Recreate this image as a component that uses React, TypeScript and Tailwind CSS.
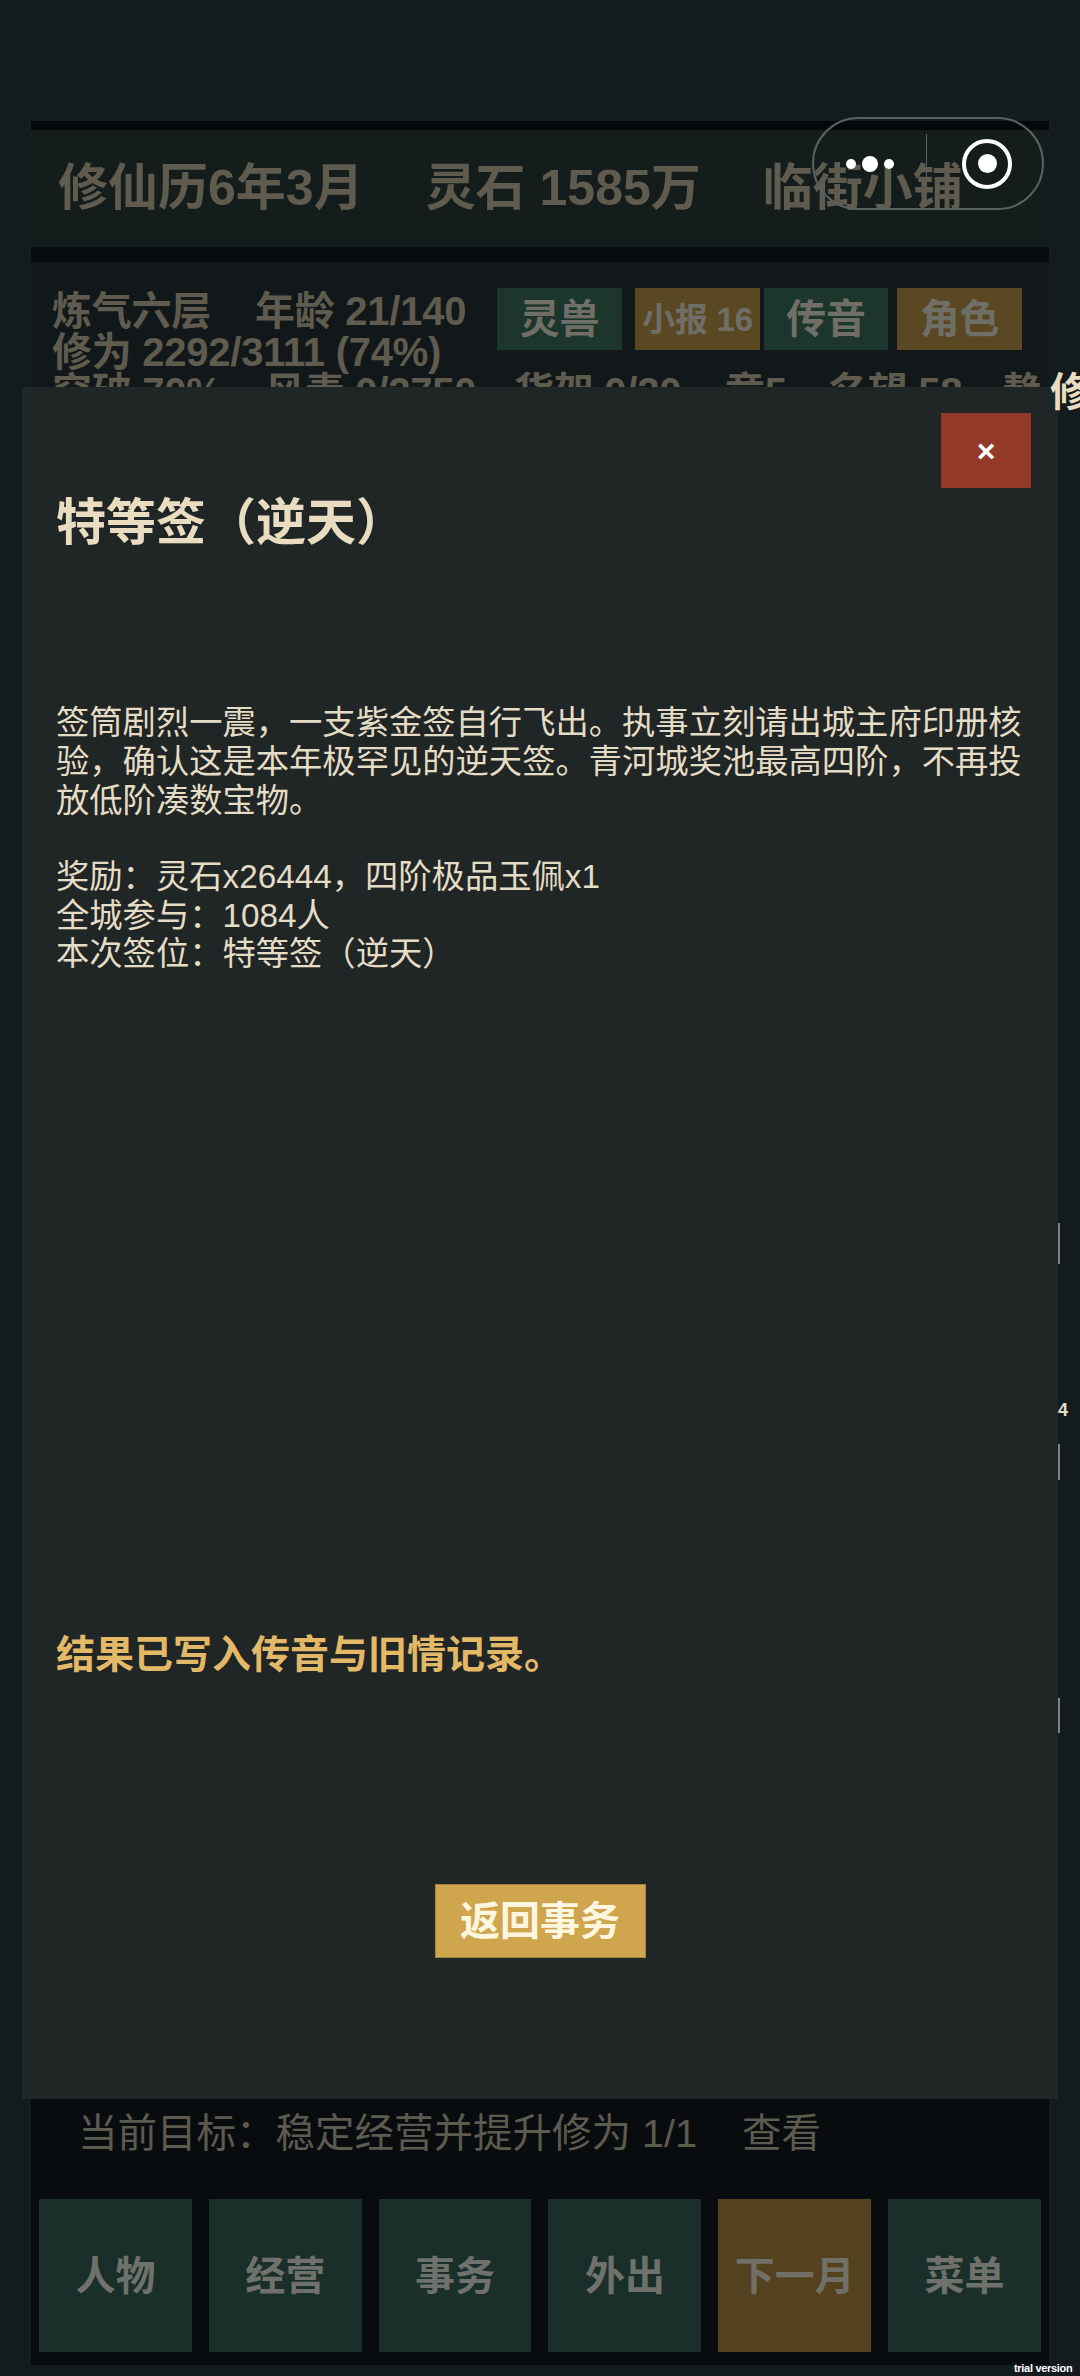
const font = "font-['Liberation_Sans','Noto_Sans_CJK_SC',sans-serif]";

const sideButtons = [
  { label: "灵兽", cls: "w-[125px] bg-[#1c352d] text-[40px]", mr: "mr-[13px]" },
  { label: "小报 16", cls: "w-[125px] bg-[#5a4822] text-[33px]", mr: "mr-[4px]" },
  { label: "传音", cls: "w-[124px] bg-[#1c352d] text-[40px]", mr: "mr-[9px]" },
  { label: "角色", cls: "w-[125px] bg-[#5a4822] text-[40px]", mr: "" },
];

const navItems = [
  { label: "人物", gold: false },
  { label: "经营", gold: false },
  { label: "事务", gold: false },
  { label: "外出", gold: false },
  { label: "下一月", gold: true },
  { label: "菜单", gold: false },
];

function Capsule() {
  return (
    <div className="absolute left-[812px] top-[117px] flex h-[93px] w-[232px] items-center rounded-full border-2 border-[#5a5f5f]">
      <div className="flex w-[112px] items-center justify-center gap-[6px]">
        <span className="h-[10px] w-[10px] rounded-full bg-white" />
        <span className="h-[16px] w-[16px] rounded-full bg-white" />
        <span className="h-[10px] w-[10px] rounded-full bg-white" />
      </div>
      <div className="h-[59px] w-px bg-[#5a5f5f]" />
      <div className="ml-[35px] flex h-[50px] w-[50px] items-center justify-center rounded-full border-[4px] border-white">
        <span className="h-[19px] w-[19px] rounded-full bg-white" />
      </div>
    </div>
  );
}

function Modal() {
  return (
    <div className="absolute left-[22px] top-[387px] flex h-[1712px] w-[1036px] flex-col bg-[#202526] px-[34px]">
      <button className="absolute right-[27px] top-[26px] flex h-[75px] w-[90px] items-center justify-center bg-[#93392a] text-[32px] font-bold leading-none text-white">
        ×
      </button>
      <h2 className="mt-[107px] text-[50px] font-semibold leading-[58px] text-[#e9dcc0]">特等签（逆天）</h2>
      <div className="mt-[151px] text-[33.3px] leading-[39px] text-[#e4dcc4]">
        <p>签筒剧烈一震，一支紫金签自行飞出。执事立刻请出城主府印册核验，确认这是本年极罕见的逆天签。青河城奖池最高四阶，不再投放低阶凑数宝物。</p>
        <div className="mt-[38px] leading-[38.5px]">
          <p>奖励：灵石x26444，四阶极品玉佩x1</p>
          <p>全城参与：1084人</p>
          <p>本次签位：特等签（逆天）</p>
        </div>
      </div>
      <p className="mt-[658px] text-[39px] font-semibold leading-[46px] text-[#e3b866]">结果已写入传音与旧情记录。</p>
      <button className="mx-auto mt-[206px] flex h-[74px] w-[211px] items-center justify-center border border-[#a5843f] bg-[#cfa54d] text-[40px] font-semibold text-[#fff6e0]">
        返回事务
      </button>
    </div>
  );
}

export default function App() {
  return (
    <div className={`relative h-[2376px] w-[1080px] overflow-hidden bg-[#141b1f] ${font}`}>
      <div className="flex h-full flex-col px-[31px] pb-[11px] pt-[121px]">
        <div className="h-[9px] bg-[#050709]" />
        <div className="flex h-[117px] items-center gap-[62px] whitespace-nowrap bg-[#141c1c] pl-[27px] text-[50px] font-semibold text-[#5f5b4f]">
          <span>修仙历6年3月</span>
          <span>灵石 1585万</span>
          <span>临街小铺</span>
        </div>
        <div className="h-[15px] bg-[#090c0e]" />
        <div className="h-[200px] overflow-hidden bg-[#12181a] pl-[21px] pt-[29px] text-[40px] font-semibold leading-[41px] tracking-[-0.25px] text-[#5f5b4f]">
          <div className="flex">
            <div className="w-[445px] shrink-0 whitespace-nowrap">
              <p className="flex gap-[44px]"><span>炼气六层</span><span>年龄 21/140</span></p>
              <p>修为 2292/3111 (74%)</p>
            </div>
            <div className="-mt-[3px] flex h-[62px] shrink-0 text-[#6f6f68]">
              {sideButtons.map((b) => (
                <div key={b.label} className={`flex shrink-0 items-center justify-center ${b.cls} ${b.mr}`}>{b.label}</div>
              ))}
            </div>
          </div>
          <p className="-mt-[1px] flex whitespace-nowrap">
            <span className="w-[213px] shrink-0">穿破 70%</span>
            <span className="w-[249px] shrink-0">风毒 0/2750</span>
            <span className="w-[211px] shrink-0">货架 0/20</span>
            <span className="w-[103px] shrink-0">章5</span>
            <span className="w-[175px] shrink-0">名望 58</span>
            <span>静</span>
          </p>
        </div>
        <div className="flex-1 bg-[#12181a]" />
        <div className="flex h-[266px] flex-col bg-[#090c0e] px-[8px]">
          <p className="mt-[14px] h-[86px] whitespace-nowrap pl-[39px] text-[39.5px] leading-[40px] text-[#5d5a50]">
            当前目标：稳定经营并提升修为 1/1<span className="ml-[45px]">查看</span>
          </p>
          <div className="grid grid-cols-6 gap-x-[17px]">
            {navItems.map((n) => (
              <div
                key={n.label}
                className={`flex h-[153px] items-center justify-center text-[40px] font-semibold ${n.gold ? "bg-[#54421f] text-[#716f66]" : "bg-[#1a2f29] text-[#6f716c]"}`}
              >
                {n.label}
              </div>
            ))}
          </div>
        </div>
      </div>

      <Capsule />
      <Modal />

      {/* stray marks from the page underneath */}
      <span className="absolute left-[1050px] top-[368px] text-[40px] font-semibold leading-[48px] text-[#e9dcc0]">修</span>
      <span className="absolute left-[1058px] top-[1223px] h-[41px] w-[2px] bg-[#7d8180]" />
      <span className="absolute left-[1058px] top-[1400px] text-[18px] font-bold leading-[20px] text-[#e4dcc4]">4</span>
      <span className="absolute left-[1058px] top-[1444px] h-[36px] w-[2px] bg-[#7d8180]" />
      <span className="absolute left-[1058px] top-[1698px] h-[35px] w-[2px] bg-[#7d8180]" />
      <span className="absolute left-[1014px] top-[2362px] whitespace-nowrap text-[11px] font-bold leading-[12px] tracking-[-0.3px] text-white">trial version</span>
    </div>
  );
}
